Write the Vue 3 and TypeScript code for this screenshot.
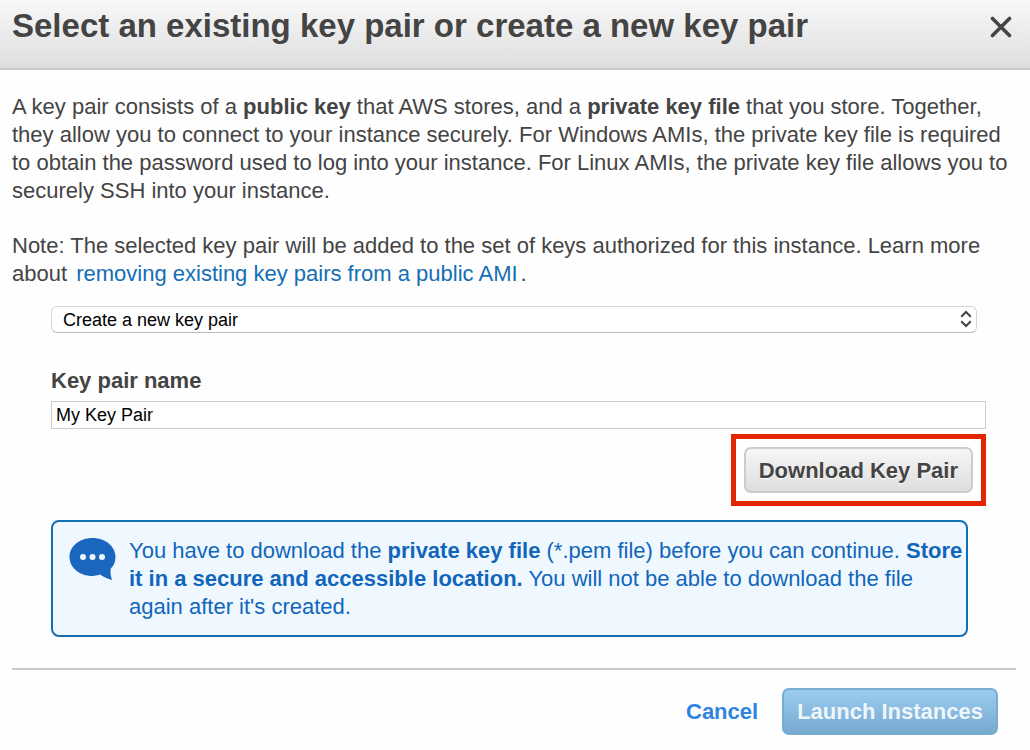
<script setup lang="ts">
import { ref } from 'vue'

const mode = ref<string>('create')
const keyName = ref<string>('My Key Pair')
</script>

<template>
  <main class="dialog" role="dialog" aria-labelledby="dialog-title">
    <header class="head">
      <h1 id="dialog-title">Select an existing key pair or create a new key pair</h1>
      <button class="close" type="button" aria-label="Close">
        <svg viewBox="0 0 22 22" width="22" height="22" aria-hidden="true">
          <path d="M2.5 2.5L19.5 19.5M19.5 2.5L2.5 19.5" fill="none" stroke="#444" stroke-width="3.6" stroke-linecap="round" />
        </svg>
      </button>
    </header>

    <section class="body">
      <p>
        A key pair consists of a <b>public key</b> that AWS stores, and a <b>private key file</b> that you store. Together,<br />
        they allow you to connect to your instance securely. For Windows AMIs, the private key file is required<br />
        to obtain the password used to log into your instance. For Linux AMIs, the private key file allows you to<br />
        securely SSH into your instance.
      </p>
      <p>
        Note: The selected key pair will be added to the set of keys authorized for this instance. Learn more<br />
        about <a class="more" href="#">removing existing key pairs from a public AMI</a>.
      </p>

      <form class="form" @submit.prevent>
        <div class="select-wrap">
          <select v-model="mode" aria-label="Key pair option">
            <option value="create">Create a new key pair</option>
            <option value="existing">Choose an existing key pair</option>
          </select>
          <svg class="arrows" viewBox="0 0 12 18" width="12" height="18" aria-hidden="true">
            <path d="M1.200 6.800L6 2L10.800 6.800M1.200 11.200L6 16L10.800 11.200" fill="none" stroke="#444" stroke-width="2" />
          </svg>
        </div>

        <label for="key-name">Key pair name</label>
        <input id="key-name" v-model="keyName" type="text" />

        <div class="highlight">
          <button class="download" type="button">Download Key Pair</button>
        </div>

        <div class="info">
          <svg class="bubble" viewBox="0 0 48 44" width="48" height="44" aria-hidden="true">
            <path d="M24.500 1C37.500 1 47.500 9.500 47.500 20C47.500 24.800 45.800 28.600 42.800 31.500C42.200 35.500 42.500 39.500 44.300 43C39.500 41.800 35.500 40 32.100 37.600C29.700 38.400 27.200 39 24.500 39C11.500 39 1.500 30.500 1.500 20C1.500 9.500 11.500 1 24.500 1Z" fill="#1b66bf" />
            <g fill="#f0f8ff">
              <circle cx="15" cy="20" r="3" />
              <circle cx="24.500" cy="20" r="3" />
              <circle cx="34" cy="20" r="3" />
            </g>
          </svg>
          <p>
            You have to download the <b>private key file</b> (*.pem file) before you can continue. <b>Store<br />
            it in a secure and accessible location.</b> You will not be able to download the file<br />
            again after it's created.
          </p>
        </div>
      </form>
    </section>

    <footer class="foot">
      <button class="cancel" type="button">Cancel</button>
      <button class="launch" type="button">Launch Instances</button>
    </footer>
  </main>
</template>

<style>
body {
  margin: 0;
  background: #fefefe;
}
</style>

<style scoped>
.dialog {
  font-family: "Liberation Sans", Arial, sans-serif;
  font-size: 22px;
  line-height: 28px;
  color: #444;
  white-space: nowrap;
}
button,
select,
input {
  font-family: inherit;
  box-sizing: border-box;
  margin: 0;
}
button {
  cursor: pointer;
}
.head {
  display: flex;
  justify-content: space-between;
  align-items: flex-start;
  box-sizing: border-box;
  min-height: 70px;
  padding: 8px 18px 22px 12px;
  background: linear-gradient(#f8f8f8, #dedede);
  border-bottom: 2px solid #c8c8c8;
}
h1 {
  margin: 0;
  font-size: 33px;
  line-height: 36px;
}
.close {
  display: flex;
  align-items: center;
  height: 38px;
  padding: 0;
  border: 0;
  background: none;
}
.body {
  padding: 23px 12px 0;
}
p {
  margin: 0;
}
.body > p + p {
  margin-top: 27px;
}
.more {
  margin: 0 3px;
  color: #146eb4;
  text-decoration: none;
}
.form {
  display: flex;
  flex-direction: column;
  margin: 18px 32px 0 39px;
}
.select-wrap {
  position: relative;
  margin-right: 9px;
}
select {
  display: block;
  width: 100%;
  height: 27px;
  padding: 0 30px 0 11px;
  appearance: none;
  border: 1px solid #d4d4d4;
  border-bottom-color: #bbb;
  border-radius: 6px;
  background: #fff;
  color: #000;
  font-size: 18px;
}
.arrows {
  position: absolute;
  top: 4px;
  right: 5px;
  pointer-events: none;
}
label {
  margin: 34px 0 6px;
  font-weight: bold;
}
input {
  height: 28px;
  padding: 0 4px;
  border: 1px solid #ccc;
  background: #fff;
  color: #000;
  font-size: 18px;
}
.highlight {
  align-self: flex-end;
  margin: 5px 0 14px;
  padding: 8px;
  border: 5px solid #e42600;
}
.download {
  display: block;
  height: 46px;
  padding: 2px 13px 0;
  border: 2px solid #ccc;
  border-radius: 7px;
  background: linear-gradient(#f6f6f6, #dedede);
  color: #444;
  font-size: 22px;
  font-weight: bold;
  text-shadow: 0 1px 0 #fff;
}
.info {
  display: flex;
  align-items: flex-start;
  gap: 13px;
  margin-right: 18px;
  padding: 15px 15px 14px;
  border: 2px solid #146eb4;
  border-radius: 8px;
  background: #f0f8ff;
  color: #1166bb;
}
.bubble {
  flex: none;
}
.foot {
  display: flex;
  justify-content: flex-end;
  align-items: center;
  gap: 24px;
  margin: 31px 14px 0 12px;
  padding: 18px 18px 0 0;
  border-top: 2px solid #c8c8c8;
}
.cancel {
  padding: 0;
  border: 0;
  background: none;
  color: #2f84e0;
  font-size: 22px;
  font-weight: bold;
}
.launch {
  height: 47px;
  padding: 0 13px;
  border: 2px solid #78add0;
  border-radius: 7px;
  background: linear-gradient(#9bccf0, #78a9cf);
  color: #eef6fc;
  font-size: 22px;
  font-weight: bold;
}
</style>
